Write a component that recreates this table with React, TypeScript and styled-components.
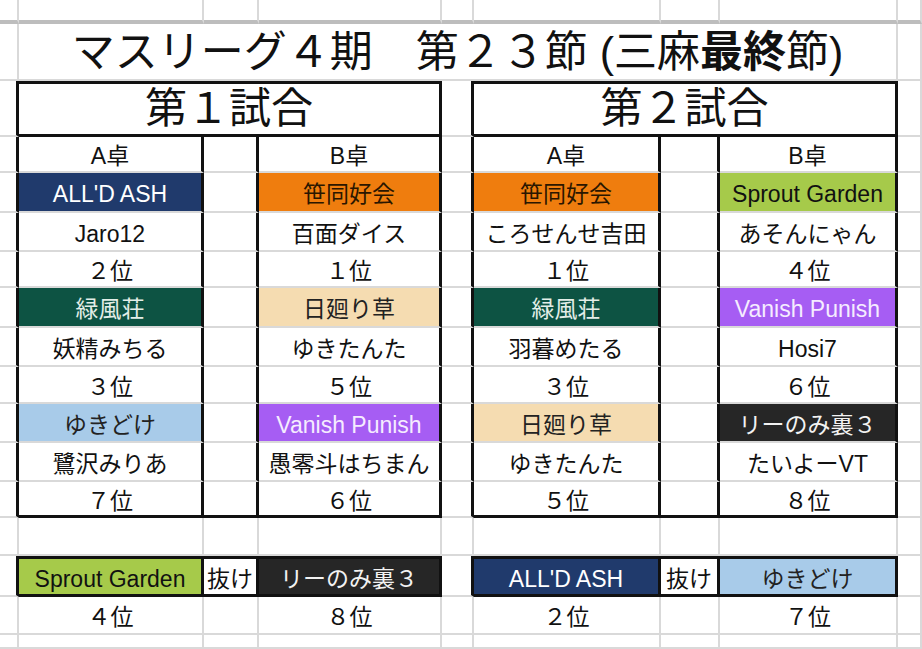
import React from 'react';
import styled, { createGlobalStyle } from 'styled-components';

const GRID = '#d9d9d9';
const INK = '#111111';

const GlobalStyle = createGlobalStyle`
  html, body {
    margin: 0;
    padding: 0;
    background: #ffffff;
  }
  body {
    font-family: 'Liberation Sans', 'Noto Sans CJK JP', sans-serif;
    color: ${INK};
  }
`;

const Sheet = styled.div`
  width: 922px;
  height: 649px;
  overflow: hidden;
  display: flex;
  flex-direction: column;
  background: #ffffff;
`;

const SheetRow = styled.div<{ $h?: number }>`
  flex: ${(p) => (p.$h ? `0 0 ${p.$h}px` : '1 1 auto')};
  display: grid;
  grid-template-columns: 19px 185px 55px 183px 32px 187px 59px 178px 1fr;
  min-height: 0;
`;

type CellProps = {
  $span?: number;
  $bg?: string;
  $fg?: string;
  $wall?: boolean;
  $lid?: boolean;
  $floor?: boolean;
};

const Cell = styled.div<CellProps>`
  grid-column: span ${(p) => p.$span ?? 1};
  box-sizing: border-box;
  min-width: 0;
  display: flex;
  align-items: center;
  justify-content: center;
  padding-top: 5px;
  overflow: hidden;
  white-space: nowrap;
  font-size: 23px;
  line-height: 1;
  background: ${(p) => p.$bg ?? '#ffffff'};
  color: ${(p) => p.$fg ?? INK};
  border-right: ${(p) => (p.$wall ? `3px solid ${INK}` : `2px solid ${GRID}`)};
  border-bottom: ${(p) => (p.$floor ? `3px solid ${INK}` : `2px solid ${GRID}`)};
  border-top: ${(p) => (p.$lid ? `3px solid ${INK}` : 'none')};
`;

const FrozenCell = styled(Cell)`
  border-bottom: 4px solid #bdbdbd;
`;

const TitleCell = styled(Cell)`
  font-size: 43px;
  padding-top: 2px;
`;

const MatchCell = styled(Cell)`
  font-size: 42px;
  padding-top: 0;
`;

const Strong = styled.span`
  font-weight: 700;
`;

type Tone = 'navy' | 'orange' | 'forest' | 'sand' | 'sky' | 'violet' | 'lime' | 'ink';

const TONES: Record<Tone, { bg: string; fg: string }> = {
  navy: { bg: '#203a6c', fg: '#ffffff' },
  orange: { bg: '#ef7d0e', fg: '#2a1600' },
  forest: { bg: '#0d5343', fg: '#e3eee8' },
  sand: { bg: '#f5dcb1', fg: '#222222' },
  sky: { bg: '#a8cbe9', fg: '#222222' },
  violet: { bg: '#a65df3', fg: '#f5ecff' },
  lime: { bg: '#a6ca4a', fg: '#111111' },
  ink: { bg: '#262626', fg: '#f2f2f2' },
};

type Seat = { team: string; tone: Tone; player: string; rank: string };
type Out = { team: string; tone: Tone; rank: string };
type Game = { title: string; a: Seat[]; b: Seat[]; out: [Out, Out] };

const games: Game[] = [
  {
    title: '第１試合',
    a: [
      { team: "ALL'D ASH", tone: 'navy', player: 'Jaro12', rank: '２位' },
      { team: '緑風荘', tone: 'forest', player: '妖精みちる', rank: '３位' },
      { team: 'ゆきどけ', tone: 'sky', player: '鷺沢みりあ', rank: '７位' },
    ],
    b: [
      { team: '笹同好会', tone: 'orange', player: '百面ダイス', rank: '１位' },
      { team: '日廻り草', tone: 'sand', player: 'ゆきたんた', rank: '５位' },
      { team: 'Vanish Punish', tone: 'violet', player: '愚零斗はちまん', rank: '６位' },
    ],
    out: [
      { team: 'Sprout Garden', tone: 'lime', rank: '４位' },
      { team: 'リーのみ裏３', tone: 'ink', rank: '８位' },
    ],
  },
  {
    title: '第２試合',
    a: [
      { team: '笹同好会', tone: 'orange', player: 'ころせんせ吉田', rank: '１位' },
      { team: '緑風荘', tone: 'forest', player: '羽暮めたる', rank: '３位' },
      { team: '日廻り草', tone: 'sand', player: 'ゆきたんた', rank: '５位' },
    ],
    b: [
      { team: 'Sprout Garden', tone: 'lime', player: 'あそんにゃん', rank: '４位' },
      { team: 'Vanish Punish', tone: 'violet', player: 'Hosi7', rank: '６位' },
      { team: 'リーのみ裏３', tone: 'ink', player: 'たいよーVT', rank: '８位' },
    ],
    out: [
      { team: "ALL'D ASH", tone: 'navy', rank: '２位' },
      { team: 'ゆきどけ', tone: 'sky', rank: '７位' },
    ],
  },
];

const COLS = [0, 1, 2, 3, 4, 5, 6, 7, 8];
const KINDS = ['team', 'player', 'rank'] as const;
type Kind = (typeof KINDS)[number];
const SEAT_HEIGHTS = [40, 39, 36, 40, 39, 37, 39, 39, 36];

const BlankRow: React.FC<{ h?: number }> = ({ h }) => (
  <SheetRow $h={h}>
    {COLS.map((c) => (
      <Cell key={c} />
    ))}
  </SheetRow>
);

const SeatCell: React.FC<{ seat: Seat; kind: Kind; last: boolean }> = ({ seat, kind, last }) => {
  if (kind === 'team') {
    const tone = TONES[seat.tone];
    return (
      <Cell $wall $floor={last} $bg={tone.bg} $fg={tone.fg}>
        {seat.team}
      </Cell>
    );
  }
  return (
    <Cell $wall $floor={last}>
      {kind === 'player' ? seat.player : seat.rank}
    </Cell>
  );
};

const SeatLine: React.FC<{ slot: number; kind: Kind; h: number; last: boolean }> = ({ slot, kind, h, last }) => (
  <SheetRow $h={h}>
    <Cell $wall />
    {games.map((g, gi) => (
      <React.Fragment key={g.title}>
        <SeatCell seat={g.a[slot]} kind={kind} last={last} />
        <Cell $wall $floor={last} />
        <SeatCell seat={g.b[slot]} kind={kind} last={last} />
        <Cell $wall={gi === 0} />
      </React.Fragment>
    ))}
  </SheetRow>
);

const App: React.FC = () => {
  return (
    <>
      <GlobalStyle />
      <Sheet>
        <SheetRow $h={24}>
          {COLS.map((c) => (
            <FrozenCell key={c} />
          ))}
        </SheetRow>

        <SheetRow $h={57}>
          <Cell />
          <TitleCell $span={7}>
            マスリーグ４期　第２３節 (三麻<Strong>最終</Strong>節)
          </TitleCell>
          <Cell />
        </SheetRow>

        <SheetRow $h={56}>
          <Cell $wall />
          {games.map((g, gi) => (
            <React.Fragment key={g.title}>
              <MatchCell $span={3} $wall $lid $floor>
                {g.title}
              </MatchCell>
              <Cell $wall={gi === 0} />
            </React.Fragment>
          ))}
        </SheetRow>

        <SheetRow $h={36}>
          <Cell $wall />
          {games.map((g, gi) => (
            <React.Fragment key={g.title}>
              <Cell $wall>A卓</Cell>
              <Cell $wall />
              <Cell $wall>B卓</Cell>
              <Cell $wall={gi === 0} />
            </React.Fragment>
          ))}
        </SheetRow>

        {[0, 1, 2].map((slot) =>
          KINDS.map((kind, ki) => (
            <SeatLine
              key={`${slot}-${kind}`}
              slot={slot}
              kind={kind}
              h={SEAT_HEIGHTS[slot * 3 + ki]}
              last={slot === 2 && kind === 'rank'}
            />
          ))
        )}

        <BlankRow h={38} />

        <SheetRow $h={41}>
          <Cell $wall />
          {games.map((g, gi) => (
            <React.Fragment key={g.title}>
              <Cell $wall $lid $floor $bg={TONES[g.out[0].tone].bg} $fg={TONES[g.out[0].tone].fg}>
                {g.out[0].team}
              </Cell>
              <Cell $wall $lid $floor>
                抜け
              </Cell>
              <Cell $wall $lid $floor $bg={TONES[g.out[1].tone].bg} $fg={TONES[g.out[1].tone].fg}>
                {g.out[1].team}
              </Cell>
              <Cell $wall={gi === 0} />
            </React.Fragment>
          ))}
        </SheetRow>

        <SheetRow $h={38}>
          <Cell />
          {games.map((g) => (
            <React.Fragment key={g.title}>
              <Cell>{g.out[0].rank}</Cell>
              <Cell />
              <Cell>{g.out[1].rank}</Cell>
              <Cell />
            </React.Fragment>
          ))}
        </SheetRow>

        <BlankRow />
      </Sheet>
    </>
  );
};

export default App;
